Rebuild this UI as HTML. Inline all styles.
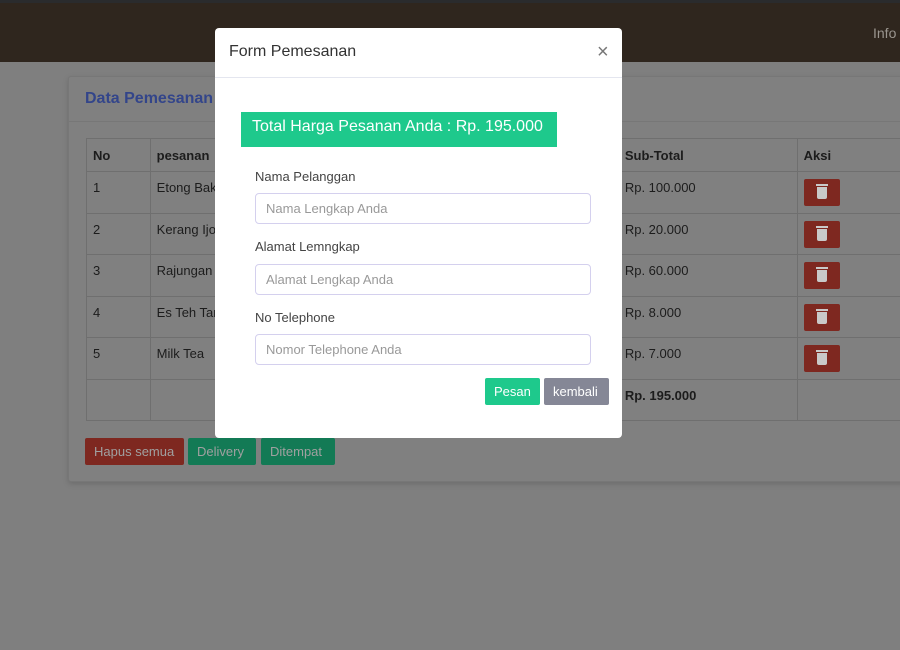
<!DOCTYPE html>
<html><head><style>
*{box-sizing:border-box;margin:0;padding:0}
body{width:900px;height:650px;overflow:hidden;background:#7f7f7f;font-family:"Liberation Sans",sans-serif;position:relative;font-size:13px;color:#1c1c1c}
.top{position:absolute;left:0;top:0;width:900px;height:3px;background:#2a2b2d}
.nav{position:absolute;left:0;top:3px;width:900px;height:59px;background:#2f261e}
.nav span{position:absolute;left:873px;top:22px;color:#9a958f;font-size:14px;white-space:nowrap}
.card{position:absolute;left:68px;top:76px;width:850px;height:406px;background:#808080;border:1px solid #777;border-radius:3px;box-shadow:0 2px 6px rgba(0,0,0,.15)}
.card .hd{height:45px;border-bottom:1px solid #777;padding:13px 16px;color:#33458a;font-size:16px;font-weight:bold}
table{position:absolute;left:17px;top:61px;border-collapse:collapse}
td,th{border:1px solid #6f6f6f;padding:0 6px;text-align:left;vertical-align:top;font-size:13px}
th{height:33px;vertical-align:middle}
td{height:41.5px;padding-top:8px}
.del{display:inline-block;width:36px;height:27px;background:#7e2820;border-radius:2px;position:relative;margin-top:-1px}
.del:before{content:"";position:absolute;left:13px;top:8px;width:10px;height:12px;background:#c9c9c9;border-radius:0 0 2px 2px}
.del:after{content:"";position:absolute;left:12px;top:5px;width:12px;height:2px;background:#c9c9c9}
.b{position:absolute;top:438px;height:27px;color:#a0a0a0;font-size:13px;padding:6px 9px;border-radius:2px;white-space:nowrap}
.modal{position:absolute;left:215px;top:28px;width:407px;height:410px;background:#fff;border-radius:4px}
.mh{height:50px;border-bottom:1px solid #e4e6ef;padding:15px 14px;font-size:16px;color:#333}
.x{position:absolute;left:382px;top:13px;font-size:20px;color:#777}
.badge{position:absolute;left:26px;top:84px;width:316px;height:35px;background:#1ec98c;color:#fff;font-size:16px;padding:6px 11px;white-space:nowrap}
.lbl{position:absolute;left:40px;font-size:13px;color:#444}
.in{position:absolute;left:40px;width:336px;height:31px;border:1px solid #d4d0ee;border-radius:4px;padding:7px 10px;color:#999;font-size:13px}
.btn{position:absolute;top:350px;height:27px;color:#fff;font-size:13px;padding:6px 9px;border-radius:2px}
</style></head><body>
<div class="top"></div>
<div class="nav"><span>Info I</span></div>
<div class="card"><div class="hd">Data Pemesanan</div>
<table>
<tr><th style="width:64px">No</th><th style="width:200px">pesanan</th><th style="width:272px"></th><th style="width:180px">Sub-Total</th><th style="width:120px">Aksi</th></tr>
<tr><td>1</td><td>Etong Bakar</td><td></td><td>Rp. 100.000</td><td><span class="del"></span></td></tr>
<tr><td>2</td><td>Kerang Ijo</td><td></td><td>Rp. 20.000</td><td><span class="del"></span></td></tr>
<tr><td>3</td><td>Rajungan</td><td></td><td>Rp. 60.000</td><td><span class="del"></span></td></tr>
<tr><td>4</td><td>Es Teh Tarik</td><td></td><td>Rp. 8.000</td><td><span class="del"></span></td></tr>
<tr><td>5</td><td>Milk Tea</td><td></td><td>Rp. 7.000</td><td><span class="del"></span></td></tr>
<tr><td style="height:32px"></td><td></td><td></td><td style="font-weight:bold">Rp. 195.000</td><td></td></tr>
</table>
</div>
<div class="b" style="left:85px;width:99px;background:#7e2820">Hapus semua</div>
<div class="b" style="left:188px;width:68px;background:#137a55">Delivery</div>
<div class="b" style="left:261px;width:74px;background:#137a55">Ditempat</div>
<div class="modal">
<div class="mh">Form Pemesanan</div><div class="x">×</div>
<div class="badge">Total Harga Pesanan Anda : Rp. 195.000</div>
<div class="lbl" style="top:141px">Nama Pelanggan</div>
<div class="in" style="top:165px">Nama Lengkap Anda</div>
<div class="lbl" style="top:211px">Alamat Lemngkap</div>
<div class="in" style="top:236px">Alamat Lengkap Anda</div>
<div class="lbl" style="top:282px">No Telephone</div>
<div class="in" style="top:306px">Nomor Telephone Anda</div>
<div class="btn" style="left:270px;width:55px;background:#1ec98c">Pesan</div>
<div class="btn" style="left:329px;width:65px;background:#858796">kembali</div>
</div>
</body></html>
